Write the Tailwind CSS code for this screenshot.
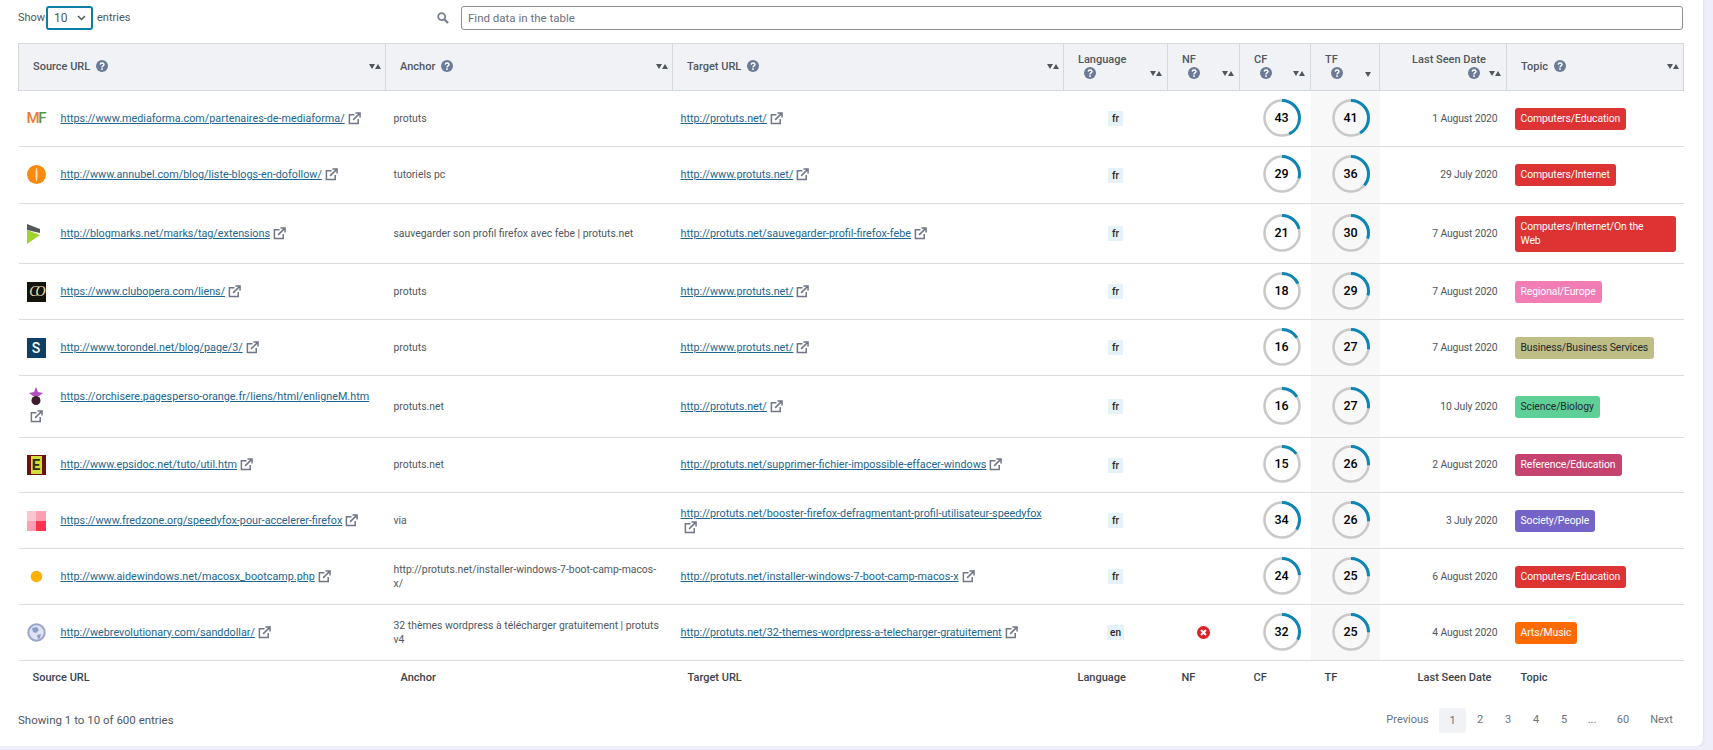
<!DOCTYPE html>
<html lang="en">
<head>
    <meta charset="UTF-8">
    <meta name="viewport" content="width=device-width, initial-scale=1.0">
    <title>Backlinks</title>
    <script src="https://cdn.jsdelivr.net/npm/@tailwindcss/browser@4"></script>
</head>
<body class="bg-[#eeeef8] font-['Roboto',sans-serif] text-[11px] leading-[14px] text-[#50575e] overflow-hidden">

    <!-- icones reutilisees -->
    <svg class="hidden">
        <symbol id="ext" viewBox="0 0 14 14">
            <path d="M7 3H1.5v9.5H11V7.5" fill="none" stroke="#6f7687" stroke-width="1.6"/>
            <path d="M5.5 8.5L12 2M8 1h5v5" fill="none" stroke="#6f7687" stroke-width="1.6"/>
        </symbol>
        <symbol id="sort" viewBox="0 0 12 5">
            <path d="M0 0h6L3 5z" fill="#50575e"/>
            <path d="M6 5h6L9 0z" fill="#50575e"/>
        </symbol>
    </svg>

    <div class="w-[1703px] h-[746px] bg-white rounded-br-md shadow-sm pl-[18px] pr-[20px] pt-[6px]">
        <!-- barre du haut -->
        <div class="flex items-center h-[24px]">
            <div class="flex items-center gap-[4px] w-[419px]">
                <span class="w-[24px]">Show</span>
                <div class="relative w-[47px] h-[24px]">
                    <select class="appearance-none w-full h-full border-2 border-[#0f7ea6] rounded-[3px] pl-[6px] text-[12px] text-[#50575e] bg-white">
                        <option>10</option>
                    </select>
                    <svg class="absolute right-[7px] top-[9px] w-[9px] h-[6px]" viewBox="0 0 9 6"><path d="M1 1l3.5 3.5L8 1" fill="none" stroke="#50575e" stroke-width="1.5"/></svg>
                </div>
                <span>entries</span>
            </div>
            <svg class="w-[12px] h-[12px] mr-[12px]" viewBox="0 0 12 12"><circle cx="4.7" cy="4.7" r="3.5" fill="none" stroke="#7a8190" stroke-width="1.8"/><path d="M7.5 7.5L11 11" stroke="#7a8190" stroke-width="2.4"/></svg>
            <input class="flex-1 h-[24px] border border-[#8c8f94] rounded-[3px] px-[6px] text-[11.5px] placeholder:text-[#6b7280]" placeholder="Find data in the table">
        </div>

        <table class="table-fixed border-collapse w-[1665px] mt-[13px]">
            <colgroup>
                <col class="w-[367px]"><col class="w-[287px]"><col class="w-[391px]"><col class="w-[104px]"><col class="w-[72px]"><col class="w-[71px]"><col class="w-[69px]"><col class="w-[127px]"><col class="w-[177px]">
            </colgroup>
            <thead>
                <tr id="head" class="h-[47px] bg-[#f0f2f5]"></tr>
            </thead>
            <tbody id="rows"></tbody>
            <tfoot>
                <tr class="h-[34px] font-medium text-[#3c434a]">
                    <td class="pl-[14px]">Source URL</td>
                    <td class="pl-[15px]">Anchor</td>
                    <td class="pl-[15px]">Target URL</td>
                    <td class="pl-[14px]">Language</td>
                    <td class="pl-[14px]">NF</td>
                    <td class="pl-[14px]">CF</td>
                    <td class="pl-[14px]">TF</td>
                    <td class="pr-[15px] text-right">Last Seen Date</td>
                    <td class="pl-[14px]">Topic</td>
                </tr>
            </tfoot>
        </table>

        <div class="flex items-center justify-between w-[1665px] mt-[13px] h-[25px]">
            <span class="text-[11.5px]">Showing 1 to 10 of 600 entries</span>
            <div class="flex items-center text-[#6b7280] text-center">
                <span class="w-[63px]">Previous</span>
                <span class="w-[27px] h-[25px] leading-[25px] bg-[#f0f2f5] rounded-[2px]">1</span>
                <span class="w-[28px]">2</span>
                <span class="w-[28px]">3</span>
                <span class="w-[28px]">4</span>
                <span class="w-[28px]">5</span>
                <span class="w-[28px]">...</span>
                <span class="w-[34px]">60</span>
                <span class="w-[43px]">Next</span>
            </div>
        </div>
    </div>

    <script>
        const help = `<svg class="inline-block align-[-2px] mx-[6px] w-[12px] h-[12px]" viewBox="0 0 12 12"><circle cx="6" cy="6" r="6" fill="#6b7a99"/><path d="M4.2 4.6C4.3 2.4 8 2.5 8 4.5c0 1.4-2 1.4-2 2.9" fill="none" stroke="#fff" stroke-width="1.4"/><rect x="5.2" y="8.3" width="1.6" height="1.6" fill="#fff"/></svg>`;
        const thBase = 'relative border border-[#d5d8dc] font-medium text-left align-middle';
        const sortIcon = `<svg class="absolute right-[4px] top-[20px] w-[12px] h-[5px]"><use href="#sort"/></svg>`;
        const sortLow = `<svg class="absolute right-[5px] top-[27px] w-[12px] h-[5px]"><use href="#sort"/></svg>`;
        const tfArrow = `<svg class="absolute right-[8px] top-[28px] w-[6px] h-[5px]" viewBox="0 0 6 5"><path d="M0 0h6L3 5z" fill="#50575e"/></svg>`;

        document.getElementById('head').innerHTML = `
            <th class="${thBase} pl-[14px]">Source URL${help}${sortIcon}</th>
            <th class="${thBase} pl-[14px]">Anchor${help}${sortIcon}</th>
            <th class="${thBase} pl-[14px]">Target URL${help}${sortIcon}</th>
            <th class="${thBase} pl-[14px]"><div>Language</div><div class="h-[15px]">${help}</div>${sortLow}</th>
            <th class="${thBase} pl-[14px]"><div>NF</div><div class="h-[15px]">${help}</div>${sortLow}</th>
            <th class="${thBase} pl-[14px]"><div>CF</div><div class="h-[15px]">${help}</div>${sortLow}</th>
            <th class="${thBase} pl-[14px]"><div>TF</div><div class="h-[15px]">${help}</div>${tfArrow}</th>
            <th class="${thBase} text-right pr-[20px]"><div>Last Seen Date</div><div class="h-[15px]">${help}</div>${sortLow}</th>
            <th class="${thBase} pl-[14px]">Topic${help}${sortIcon}</th>`;

        // favicons des sites
        const fav = {
            mf: `<span class="block w-[19px] h-[19px] leading-[19px] text-[15px] tracking-[-1.5px] font-medium"><span class="text-[#ee7a3a]">M</span><span class="text-[#4f9a3f]">F</span></span>`,
            annubel: `<svg class="w-[19px] h-[19px]" viewBox="0 0 19 19"><circle cx="9.5" cy="9.5" r="9.5" fill="#f98a0f"/><path d="M9.5 2c1.6 4 1.4 11 0 15-1.4-4-1.6-11 0-15z" fill="#fbe3b0"/></svg>`,
            blogmarks: `<svg class="w-[13px] h-[20px]" viewBox="0 0 13 20"><path d="M0 0l13 5v4L0 6z" fill="#55585c"/><path d="M0 6l13 5L0 20z" fill="#9ed42b"/></svg>`,
            club: `<span class="block w-[19px] h-[20px] bg-[#14130c] text-[#e8e2b8] font-['Liberation_Serif',serif] italic text-[14px] leading-[20px] tracking-[-3px] text-center">CO</span>`,
            torondel: `<span class="block w-[19px] h-[20px] bg-[#0f3f66] text-white font-medium text-[14px] leading-[20px] text-center">S</span>`,
            orchis: `<svg class="w-[19px] h-[19px]" viewBox="0 0 19 19"><path d="M9 0l2 5 5 1-4 3H6L2 6l5-1z" fill="#b04fc0"/><circle cx="9" cy="13.5" r="4.5" fill="#3a1c2c"/></svg>`,
            epsidoc: `<span class="flex items-center justify-center w-[19px] h-[20px] bg-[#6b120c]"><span class="block w-[11px] h-[18px] bg-[#d5dc3c] text-[#26300e] font-bold text-[15px] leading-[18px] text-center">E</span></span>`,
            fredzone: `<span class="grid grid-cols-2 w-[19px] h-[20px]"><i class="bg-[#fbc6d2]"></i><i class="bg-[#fb9fb2]"></i><i class="bg-[#fb9fb2]"></i><i class="bg-[#f93350]"></i></span>`,
            aide: `<svg class="w-[19px] h-[19px]" viewBox="0 0 19 19"><circle cx="9.5" cy="9.5" r="5.8" fill="#fdb004"/></svg>`,
            globe: `<svg class="w-[19px] h-[19px]" viewBox="0 0 19 19"><circle cx="9.5" cy="9.5" r="8.2" fill="#dfe4f5" stroke="#9aa5cc" stroke-width="2"/><path d="M5 5l5-1 2 3-3 3-3-1zM10 12l4-1-1 4-2 1z" fill="#8f9cc9"/></svg>`
        };

        const rows = [
            { h: 'h-[56px]', fav: fav.mf, src: 'https://www.mediaforma.com/partenaires-de-mediaforma/', anchor: 'protuts', target: 'http://protuts.net/', lang: 'fr', cf: 43, tf: 41, date: '1 August 2020', topic: 'Computers/Education', color: 'bg-[#dd3333] text-white' },
            { h: 'h-[57px]', fav: fav.annubel, src: 'http://www.annubel.com/blog/liste-blogs-en-dofollow/', anchor: 'tutoriels pc', target: 'http://www.protuts.net/', lang: 'fr', cf: 29, tf: 36, date: '29 July 2020', topic: 'Computers/Internet', color: 'bg-[#dd3333] text-white' },
            { h: 'h-[60px]', fav: fav.blogmarks, src: 'http://blogmarks.net/marks/tag/extensions', anchor: 'sauvegarder son profil firefox avec febe | protuts.net', target: 'http://protuts.net/sauvegarder-profil-firefox-febe', lang: 'fr', cf: 21, tf: 30, date: '7 August 2020', topic: 'Computers/Internet/On the<br>Web', color: 'w-[161px] bg-[#dd3333] text-white' },
            { h: 'h-[56px]', fav: fav.club, src: 'https://www.clubopera.com/liens/', anchor: 'protuts', target: 'http://www.protuts.net/', lang: 'fr', cf: 18, tf: 29, date: '7 August 2020', topic: 'Regional/Europe', color: 'bg-[#f27cb4] text-white' },
            { h: 'h-[56px]', fav: fav.torondel, src: 'http://www.torondel.net/blog/page/3/', anchor: 'protuts', target: 'http://www.protuts.net/', lang: 'fr', cf: 16, tf: 27, date: '7 August 2020', topic: 'Business/Business Services', color: 'bg-[#bdbd85] text-[#23282d]' },
            { h: 'h-[62px]', fav: fav.orchis, src: 'https://orchisere.pagesperso-orange.fr/liens/html/enligneM.htm', anchor: 'protuts.net', target: 'http://protuts.net/', lang: 'fr', cf: 16, tf: 27, date: '10 July 2020', topic: 'Science/Biology', color: 'bg-[#5fcf98] text-[#23282d]' },
            { h: 'h-[55px]', fav: fav.epsidoc, src: 'http://www.epsidoc.net/tuto/util.htm', anchor: 'protuts.net', target: 'http://protuts.net/supprimer-fichier-impossible-effacer-windows', lang: 'fr', cf: 15, tf: 26, date: '2 August 2020', topic: 'Reference/Education', color: 'bg-[#c6436f] text-white' },
            { h: 'h-[56px]', fav: fav.fredzone, src: 'https://www.fredzone.org/speedyfox-pour-accelerer-firefox', anchor: 'via', target: 'http://protuts.net/booster-firefox-defragmentant-profil-utilisateur-speedyfox', lang: 'fr', cf: 34, tf: 26, date: '3 July 2020', topic: 'Society/People', color: 'bg-[#7464c8] text-white' },
            { h: 'h-[56px]', fav: fav.aide, src: 'http://www.aidewindows.net/macosx_bootcamp.php', anchor: 'http://protuts.net/installer-windows-7-boot-camp-macos-x/', target: 'http://protuts.net/installer-windows-7-boot-camp-macos-x', lang: 'fr', cf: 24, tf: 25, date: '6 August 2020', topic: 'Computers/Education', color: 'bg-[#dd3333] text-white' },
            { h: 'h-[56px]', fav: fav.globe, src: 'http://webrevolutionary.com/sanddollar/', anchor: '32 thèmes wordpress à télécharger gratuitement | protuts v4', target: 'http://protuts.net/32-themes-wordpress-a-telecharger-gratuitement', lang: 'en', nf: true, cf: 32, tf: 25, date: '4 August 2020', topic: 'Arts/Music', color: 'bg-[#ff6a00] text-white' }
        ];

        function extIcon() {
            return `<svg class="inline-block align-[-3px] ml-[3px] w-[13px] h-[13px]"><use href="#ext"/></svg>`;
        }

        function gauge(value) {
            const dash = value / 100 * 110;
            return `<div class="relative w-[38px] h-[38px] mb-[2px]">
                <svg class="w-[38px] h-[38px] -rotate-90" viewBox="0 0 38 38">
                    <circle cx="19" cy="19" r="17.5" fill="none" stroke="#c9c9c9" stroke-width="2.6"/>
                    <circle cx="19" cy="19" r="17.5" fill="none" stroke="#0d86b3" stroke-width="3" stroke-dasharray="${dash} 110"/>
                </svg>
                <span class="absolute inset-0 flex items-center justify-center text-[12.5px] font-medium text-black">${value}</span>
            </div>`;
        }

        const link = 'text-[#22668f] underline text-[10.8px]';
        document.getElementById('rows').innerHTML = rows.map(r => `
            <tr class="${r.h} border-b border-[#dcdcde]">
                <td class="pl-[8px] pr-[8px] align-middle leading-[20px]">
                    <span class="float-left block w-[19px] h-[20px] mr-[15px]">${r.fav}</span><a href="#" class="inline-block ${link}">${r.src}</a>${extIcon()}
                </td>
                <td class="px-[8px] align-middle text-[10.4px]">${r.anchor}</td>
                <td class="px-[8px] align-middle"><a href="#" class="${link}">${r.target}</a>${extIcon()}</td>
                <td class="text-center align-middle"><span class="inline-block min-w-[15px] px-[3px] bg-[#e6f2fa] text-[#23282d] font-medium text-[10px] leading-[15px]">${r.lang}</span></td>
                <td class="align-middle">${r.nf ? `<svg class="mx-auto w-[13px] h-[13px]" viewBox="0 0 13 13"><circle cx="6.5" cy="6.5" r="6.5" fill="#dd1f26"/><path d="M4 4l5 5M9 4l-5 5" stroke="#fff" stroke-width="2"/></svg>` : ''}</td>
                <td class="pl-[23px] align-middle">${gauge(r.cf)}</td>
                <td class="pl-[21px] align-middle bg-[#f8f8f8]">${gauge(r.tf)}</td>
                <td class="pr-[9px] text-right align-middle text-[10.4px] tracking-[-0.15px]">${r.date}</td>
                <td class="px-[8px] align-middle"><span class="inline-block rounded-[3px] px-[6px] py-[4px] text-[10.4px] tracking-[-0.1px] ${r.color}">${r.topic}</span></td>
            </tr>`).join('');
    </script>

</body>
</html>
